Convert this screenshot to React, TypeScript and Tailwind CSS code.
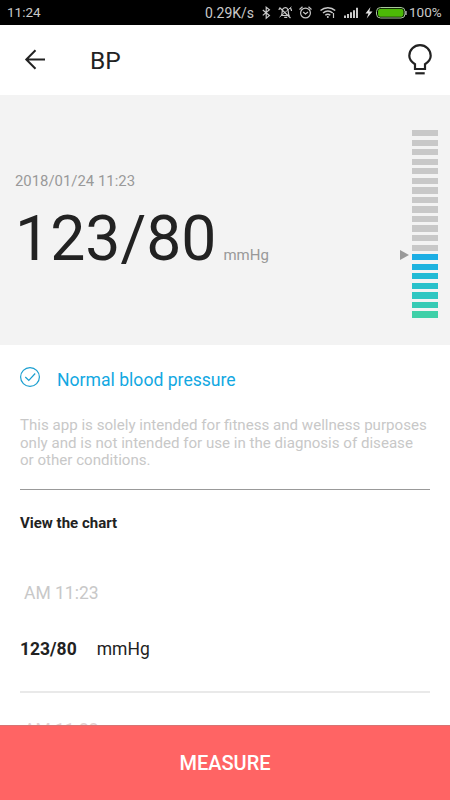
const levels = [
  'bg-[#c8c8c8]', 'bg-[#c8c8c8]', 'bg-[#c8c8c8]', 'bg-[#c8c8c8]', 'bg-[#c8c8c8]',
  'bg-[#c8c8c8]', 'bg-[#c8c8c8]', 'bg-[#c8c8c8]', 'bg-[#c8c8c8]', 'bg-[#c8c8c8]',
  'bg-[#c8c8c8]', 'bg-[#c8c8c8]', 'bg-[#c8c8c8]', 'bg-[#1caee4]', 'bg-[#1eb3df]',
  'bg-[#22bbd5]', 'bg-[#29c1cb]', 'bg-[#2fc7c2]', 'bg-[#37cbb5]', 'bg-[#3fd0a8]',
]

function StatusIcons() {
  return (
    <svg width="149" height="25" viewBox="260 0 149 25" fill="none" stroke="#c9c9c9" strokeWidth="1.2">
      {/* bluetooth */}
      <path d="M262.8 10l6.6 5.6-3.2 2.6V7.2l3.2 2.6-6.6 5.6" />
      {/* muted bell */}
      <path d="M281.5 15.5h7.5c-1.2-2 .2-6-2.2-7.6-1.8-1-4.3.2-4.5 2.6-.2 2-.2 3.5-.8 5zM284.2 17.3h3M279.5 7.5l11 10.5M279 10c.1-1 .6-1.7 1.2-2.3M291.5 11c0-1-.4-2.2-1.2-3" />
      <path d="M291.5 6.8l-12 10.4" strokeWidth="0.9" />
      {/* alarm clock */}
      <circle cx="305.5" cy="13" r="4.9" />
      <path d="M299.5 9.5l3-2.7M311.5 9.5l-3-2.7M303.2 12l2.3 2 2.5-2" />
      {/* wifi */}
      <path d="M320.5 10.5c4.3-3.8 10.5-3.8 14.7 0M323 13c3-2.5 6.800-2.5 9.700 0M325.300 15.300c1.500-1.300 3.500-1.300 5 0" strokeWidth="1.5" />
      <circle cx="327.8" cy="17" r="1" fill="#c9c9c9" stroke="none" />
      <path d="M333.5 13v5" />
      {/* signal */}
      <path d="M345 15.5V18M348 14v4M351 12.2V18M354 10.2V18M357 7.8V18" strokeWidth="2" />
      {/* charging battery */}
      <path d="M370.5 7l-5 6.5h3l-1.8 5 5.8-7h-3.2z" fill="#e2e2e2" stroke="none" />
      <rect x="376.5" y="7.5" width="28.5" height="10.5" rx="4" stroke="#a8c99b" strokeWidth="1" />
      <rect x="378" y="8.8" width="25.5" height="8" rx="2.8" fill="#4cb907" stroke="none" />
      <path d="M406 11v4" />
    </svg>
  )
}

function StatusBar() {
  return (
    <div className="flex h-[25px] items-center bg-black pl-[7px] text-[13.5px] text-[#c9c9c9]">
      <span className="flex-1">11:24</span>
      <span className="w-[55px] text-[14px] leading-4 pt-px">0.29K/s</span>
      <StatusIcons />
      <span className="w-[41px]">100%</span>
    </div>
  )
}

function Header() {
  return (
    <header className="flex h-[70px] items-center pl-6 pr-[18px]">
      <svg width="22" height="22" viewBox="0 0 22 22" fill="none" stroke="#222" strokeWidth="2">
        <path d="M21 10.500H2.500M11.500 1.300L2.300 10.500l9.200 9.200" />
      </svg>
      <h1 className="ml-11 flex-1 pt-0.5 text-[24.5px] text-[#222]">BP</h1>
      <svg width="24" height="32" viewBox="0 0 24 32" fill="none" stroke="#222" strokeWidth="2.2">
        <path d="M7 25v-4.800C3.800 18.200 1.300 16 1.300 11.800a10.700 10.700 0 0 1 21.400 0c0 4.200-2.500 6.400-5.700 8.400V25z" />
        <path d="M7.300 29.300h9.400" />
      </svg>
    </header>
  )
}

function Reading() {
  return (
    <section className="flex h-[250px] bg-[#f3f3f3] pl-[15px] pr-3">
      <div className="flex-1 pt-[75px]">
        <p className="text-[14.9px] leading-[22px] text-[#999]">2018/01/24 11:23</p>
        <div className="mt-[9px] flex items-baseline gap-[7px]">
          <span className="text-[62.5px] leading-[76px] text-[#222]">123/80</span>
          <span className="text-[15px] text-[#999]">mmHg</span>
        </div>
      </div>
      <svg className="mr-[3px] mt-[155px]" width="9" height="10" viewBox="0 0 9 10">
        <path d="M0 0l9 5-9 5z" fill="#999" />
      </svg>
      <div className="flex flex-col gap-[3.3px] pt-[35px]">
        {levels.map((color, idx) => (
          <div key={idx} className={`h-[6.25px] w-[26px] shrink-0 ${color}`} />
        ))}
      </div>
    </section>
  )
}

export default function App() {
  return (
    <div className="flex h-[800px] w-[450px] flex-col overflow-hidden bg-white font-[Roboto,sans-serif]">
      <StatusBar />
      <Header />
      <Reading />
      <main className="h-[380px] overflow-hidden px-5">
        <div className="flex items-center pt-[23px] text-[#12a8e2]">
          <svg className="-mt-1.5" width="20" height="20" viewBox="0 0 20 20" fill="none" stroke="#1b9fd0">
            <circle cx="10" cy="10" r="9.4" strokeWidth="1.2" />
            <path d="M5.300 10l3.500 3.500 6.400-7" strokeWidth="1.2" />
          </svg>
          <span className="ml-[17px] text-[17.6px] leading-6">Normal blood pressure</span>
        </div>
        <p className="mt-[25px] whitespace-nowrap text-[15.1px] leading-[17.5px] text-[#c8c8c8]">
          This app is solely intended for fitness and wellness purposes
          <br />
          only and is not intended for use in the diagnosis of disease
          <br />
          or other conditions.
        </p>
        <hr className="mt-[19.5px] border-[#999]" />
        <h2 className="mt-[23px] text-[15px] leading-5 font-bold text-[#222]">View the chart</h2>
        <div className="mt-[50px] h-[110px] border-b-2 border-[#e9e9e9]">
          <p className="pl-1 text-[17.5px] leading-5 text-[#c8c8c8]">AM 11:23</p>
          <p className="mt-9 flex gap-5 text-[17.5px] leading-5 text-[#222]">
            <b>123/80</b>
            <span>mmHg</span>
          </p>
        </div>
        <p className="mt-[27px] pl-1 text-[17.5px] leading-5 text-[#e3cfcf]">AM 11:22</p>
      </main>
      <button className="h-[75px] border-t border-[#d87373] bg-[#ff6464] text-[20px] font-medium text-white">
        MEASURE
      </button>
    </div>
  )
}
